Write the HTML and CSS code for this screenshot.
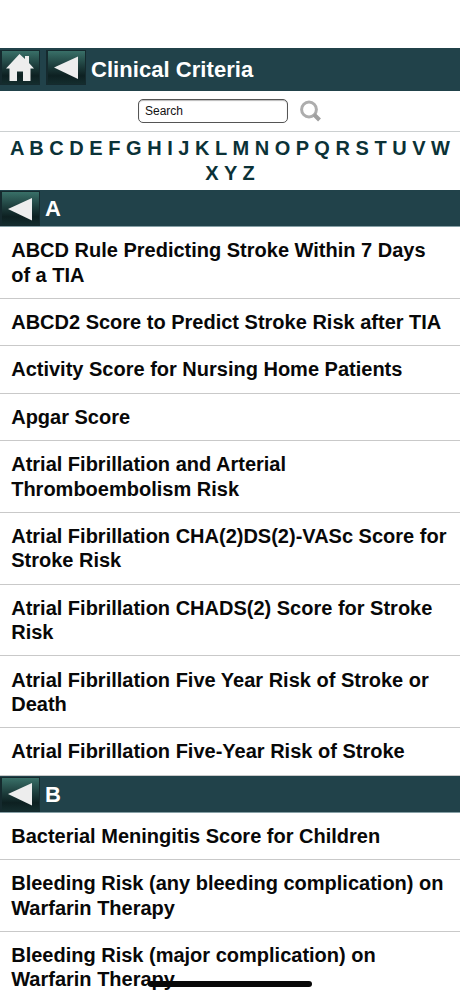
FILE: index.html
```html
<!DOCTYPE html>
<html lang="en">
<head>
    <meta charset="UTF-8">
    <meta name="viewport" content="width=device-width, initial-scale=1.0">
    <title>Clinical Criteria</title>
    <link rel="stylesheet" href="styles.css">
</head>
<body>

    <!-- Header -->
    <header>
        <a class="button" href="#">
            <svg width="30" height="30" viewBox="0 0 30 30"><path d="M13.5 1 L19 6 V3 H23 V10 L28 15.5 H24.5 V28 H17 V18.5 H11 V28 H3.5 V15.5 H0 Z" fill="#ededed"/></svg>
        </a>
        <a class="button back" href="#">
            <svg width="26" height="26" viewBox="0 0 26 26"><path d="M0 12.5 L24 1.5 V24 Z" fill="#ededed"/></svg>
        </a>
        <h1>Clinical Criteria</h1>
    </header>

    <!-- Search -->
    <form class="search">
        <input class="search-field" type="text" value="Search" aria-label="Search">
        <svg width="22" height="22" viewBox="0 0 22 22" fill="none">
            <circle cx="9" cy="9.5" r="7.4" stroke="#adadad" stroke-width="3"/>
            <path d="M14 14.5 L19.5 20" stroke="#a0a0a0" stroke-width="4"/>
        </svg>
    </form>

    <!-- Alphabet -->
    <nav>
        <a href="#A">A</a> <a href="#B">B</a> <a href="#C">C</a> <a href="#D">D</a> <a href="#E">E</a>
        <a href="#F">F</a> <a href="#G">G</a> <a href="#H">H</a> <a href="#I">I</a> <a href="#J">J</a>
        <a href="#K">K</a> <a href="#L">L</a> <a href="#M">M</a> <a href="#N">N</a> <a href="#O">O</a>
        <a href="#P">P</a> <a href="#Q">Q</a> <a href="#R">R</a> <a href="#S">S</a> <a href="#T">T</a>
        <a href="#U">U</a> <a href="#V">V</a> <a href="#W">W</a> <a href="#X">X</a> <a href="#Y">Y</a>
        <a href="#Z">Z</a>
    </nav>

    <!-- A -->
    <div class="letter" id="A">
        <a class="button" href="#">
            <svg width="26" height="26" viewBox="0 0 26 26"><path d="M0 13 L24 2 V24.5 Z" fill="#ededed"/></svg>
        </a>
        <h2>A</h2>
    </div>
    <ul>
        <li>ABCD Rule Predicting Stroke Within 7 Days of a TIA</li>
        <li>ABCD2 Score to Predict Stroke Risk after TIA</li>
        <li>Activity Score for Nursing Home Patients</li>
        <li>Apgar Score</li>
        <li>Atrial Fibrillation and Arterial Thromboembolism Risk</li>
        <li>Atrial Fibrillation CHA(2)DS(2)-VASc Score for Stroke Risk</li>
        <li>Atrial Fibrillation CHADS(2) Score for Stroke Risk</li>
        <li>Atrial Fibrillation Five Year Risk of Stroke or Death</li>
        <li>Atrial Fibrillation Five-Year Risk of Stroke</li>
    </ul>

    <!-- B -->
    <div class="letter" id="B">
        <a class="button" href="#">
            <svg width="26" height="26" viewBox="0 0 26 26"><path d="M0 13 L24 2 V24.5 Z" fill="#ededed"/></svg>
        </a>
        <h2>B</h2>
    </div>
    <ul>
        <li>Bacterial Meningitis Score for Children</li>
        <li>Bleeding Risk (any bleeding complication) on Warfarin Therapy</li>
        <li>Bleeding Risk (major complication) on Warfarin Therapy</li>
    </ul>

    <div class="home-indicator"></div>

</body>
</html>
```

FILE: styles.css
```css
body {
    font-family: "Liberation Sans", Arial, sans-serif;
    background-color: #fff;
    color: #080808;
    margin: 0;
    padding-top: 48px;
    height: 948px;
    overflow: hidden;
}
header {
    display: flex;
    align-items: flex-start;
    background-color: #21424a;
    height: 43px;
    padding-top: 2px;
    box-sizing: border-box;
}
.button {
    display: flex;
    align-items: center;
    justify-content: center;
    width: 40px;
    height: 35px;
    box-sizing: border-box;
    border: 1px solid #152a2e;
    border-left-width: 2px;
    background: linear-gradient(#397068, #1d3d3c 45%, #0d2021 75%, #142d2e);
}
.button.back {
    margin-left: 6px;
}
h1 {
    margin: 7px 0 0 5px;
    color: #fff;
    font-size: 22px;
    line-height: 25px;
    letter-spacing: 0.05px;
}
.search {
    display: flex;
    align-items: center;
    justify-content: center;
    gap: 12px;
    height: 41px;
    margin: 0;
    border-bottom: 1px solid #ccd0d1;
    box-sizing: border-box;
}
.search-field {
    width: 150px;
    height: 24px;
    box-sizing: border-box;
    padding: 0 6px;
    border: 1px solid #555;
    border-radius: 5px;
    background-color: #fff;
    box-shadow: inset 0 1px 1px #bbb;
    color: #111;
    font-family: inherit;
    font-size: 12px;
}
nav {
    height: 58px;
    padding: 4.3px 5px 0;
    box-sizing: border-box;
    color: #0b3237;
    font-size: 20px;
    font-weight: bold;
    line-height: 24.4px;
    text-align: center;
}
nav a {
    color: inherit;
    text-decoration: none;
}
.letter {
    display: flex;
    align-items: flex-start;
    height: 37px;
    padding-top: 1px;
    box-sizing: border-box;
    background-color: #21424a;
    border-bottom: 1px solid #87a0a6;
}
h2 {
    margin: 5px 0 0 5px;
    color: #fff;
    font-size: 22px;
    line-height: 25px;
}
ul {
    list-style: none;
    margin: 0;
    padding: 0;
}
li {
    padding: 11.2px 10.8px 10.8px 11.2px;
    border-bottom: 1px solid #c9c9c9;
    font-size: 20px;
    font-weight: bold;
    line-height: 24.4px;
}
.home-indicator {
    position: fixed;
    left: 148px;
    bottom: 9px;
    width: 164px;
    height: 6px;
    border-radius: 3px;
    background-color: #080808;
}
```
